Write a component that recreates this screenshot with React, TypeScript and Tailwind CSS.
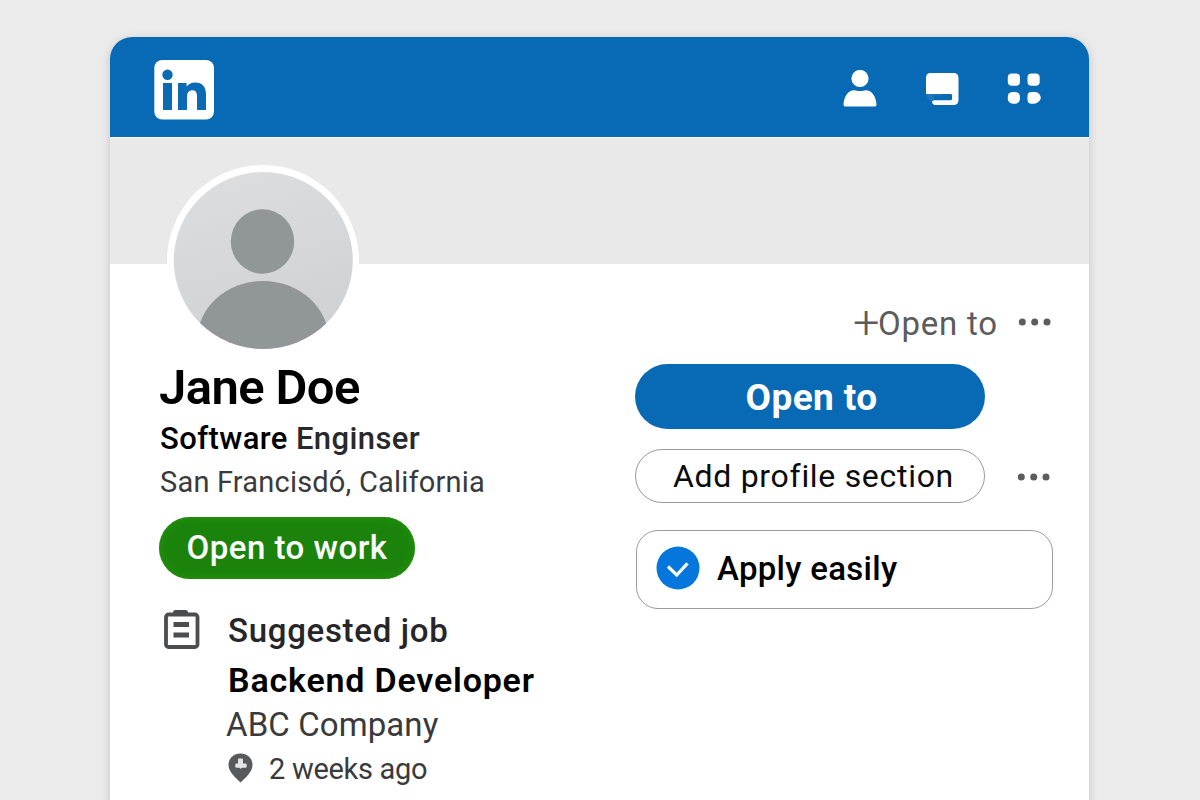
function LinkedInLogo() {
  return (
    <svg viewBox="0 0 60 60" className="h-[60px] w-[60px] shrink-0" aria-label="LinkedIn">
      <rect x=".3" width="59.700" height="59.500" rx="8" fill="#fff" />
      <g fill="#0a6ab4">
        <circle cx="13.500" cy="14.800" r="5.200" />
        <rect x="9" y="23" width="9" height="27" />
        <path d="M24 23h8.600v3.700c1.600-2.700 4.600-4.300 8.300-4.300 7.700 0 11.100 4.500 11.100 12V50h-9V36.200c0-3.800-1.300-6-4.400-6-3.600 0-5.600 2.600-5.600 6.500V50h-9z" />
      </g>
    </svg>
  );
}

function PersonIcon() {
  return (
    <svg viewBox="0 0 34 38" className="h-[38px] w-[34px]" fill="#fff">
      <circle cx="17" cy="8.500" r="8.600" />
      <path d="M2 36.500Q.5 36.500.5 34.500C1 26 5.500 20.300 11 20.300q2 0 3.500.7h5q1.500-.7 3.500-.7c5.500 0 10 5.700 10.500 14.200q0 2-1.500 2z" />
    </svg>
  );
}

function NoteIcon() {
  return (
    <svg viewBox="0 0 34 34" className="h-[34px] w-[34px]">
      <path d="M5.500 1h23Q33.500 1 33.500 6v22q0 5-5 5h-19q-2.500-.8-2.500-3 0-1.800 2-1.800H25.500q1.500 0 1.500-1.500v-3.500q0-1.200-1.200-1.200H1V6q0-5 4.500-5z" fill="#fff" />
      <path d="M1 22h16v1.500H9v4.700Q7 28.200 7 30 2 27.500 1 22z" fill="#2b7cc0" opacity=".7" />
    </svg>
  );
}

function AppsIcon() {
  return (
    <svg viewBox="0 0 34 32" className="h-8 w-[34px]" fill="#fff">
      <rect x=".8" y="0.500" width="12.200" height="12.200" rx="4" />
      <rect x="20.500" y="0.500" width="12.200" height="12.200" rx="4" />
      <rect x=".8" y="18.900" width="12.200" height="11.800" rx="5" />
      <path d="M24.500 18.900h3.500c3 0 5.800 3 5.800 5.800s-3.800 6-6.800 6h-2.500q-4 0-4-4v-3.800q0-4 4-4z" />
    </svg>
  );
}

function Avatar() {
  return (
    <svg viewBox="0 0 192 192" className="h-[192px] w-[192px]">
      <defs>
        <linearGradient id="face" x1="0" y1="0" x2="0.300" y2="1">
          <stop offset="0" stopColor="#dededf" />
          <stop offset="0.350" stopColor="#d9dadb" />
          <stop offset="1" stopColor="#cfd1d2" />
        </linearGradient>
        <clipPath id="disc">
          <ellipse cx="96.300" cy="95.500" rx="89.500" ry="88.500" />
        </clipPath>
      </defs>
      <circle cx="96" cy="96" r="96" fill="#fff" />
      <g clipPath="url(#disc)">
        <rect width="192" height="192" fill="url(#face)" />
        <ellipse cx="95.500" cy="76.500" rx="31.700" ry="32.200" fill="#919697" />
        <ellipse cx="96" cy="176" rx="66" ry="60" fill="#919697" />
      </g>
    </svg>
  );
}

function Dots() {
  return (
    <svg viewBox="0 0 34 8" className="h-2 w-[34px] shrink-0" fill="#5c5c5c">
      <circle cx="4.300" cy="4" r="3.500" />
      <circle cx="16.700" cy="4" r="3.500" />
      <circle cx="29" cy="4" r="3.500" />
    </svg>
  );
}

function ClipboardIcon() {
  return (
    <svg viewBox="0 0 36 40" className="h-10 w-9 shrink-0">
      <path d="M9 5V3.500Q9 1 11.500 1h10Q24 1 24 3.500V5z" fill="#4c4d4f" />
      <rect x="2" y="5.500" width="31.500" height="32.500" rx="2.500" fill="none" stroke="#4c4d4f" strokeWidth="3.800" />
      <rect x="9.500" y="13" width="15.500" height="5" fill="#4c4d4f" />
      <rect x="9.500" y="23.500" width="15.500" height="5" fill="#4c4d4f" />
    </svg>
  );
}

function PinIcon() {
  return (
    <svg viewBox="0 0 25 30" className="h-[30px] w-[25px] shrink-0">
      <path d="M12.500.5c7 0 12 5 12 11.500 0 6.500-6.500 12.500-12 17.500C7 24.500.5 18.500.5 12 .5 5.500 5.500.5 12.500.5z" fill="#58595b" />
      <path d="M10 6.500q0-1 1-1h3q1 0 1 1v4h2.500q1.200 0 1.200 1.200v2q0 1-1.200 1h-3.300l-1.500 1-1.500-1H8.500q-1.200 0-1.200-1.200v-1.800q0-1.200 1.200-1.200H10z" fill="#e4e4e4" />
    </svg>
  );
}

export default function App() {
  return (
    <div className="h-[800px] w-[1200px] overflow-hidden bg-[#ebebeb] pt-[37px] pl-[110px] font-['Roboto',sans-serif] whitespace-nowrap">
      <div className="h-[790px] w-[979px] overflow-hidden rounded-t-[22px] bg-white shadow-[0_2px_10px_rgba(0,0,0,0.16)]">
        <header className="flex h-[100px] items-center justify-between bg-[#086ab5] pr-[48px] pl-[44px]">
          <div className="pt-[6px]">
            <LinkedInLogo />
          </div>
          <nav className="flex items-center gap-12 pt-[3px]">
            <PersonIcon />
            <NoteIcon />
            <AppsIcon />
          </nav>
        </header>
        <div className="h-[127px] border-t border-[#f6f6f6] bg-[#e9e9e9]" />

        <main className="flex">
          <section className="-mt-[99px] w-[525px] pl-[50px]">
            <div className="pl-[7px]">
              <Avatar />
            </div>
            <h1 className="mt-[5px] -ml-[1px] h-[51px] text-[49px] leading-[52px] font-semibold tracking-[-0.6px] text-black">Jane Doe</h1>
            <p className="h-[50px] text-[31px] leading-[52px] font-medium tracking-[0.4px] text-[#29292b]">
              <span className="text-black">Software</span> Enginser
            </p>
            <p className="h-[38px] text-[29px] leading-[38px] tracking-[0.2px] text-[#3a3a3c]">San Francisdó, California</p>
            <button className="mt-[16px] -ml-[1px] flex h-[62px] w-[256px] items-center justify-center rounded-full bg-[#1b830c] text-[33px] font-medium tracking-[0.5px] text-white shadow-[inset_0_0_10px_#27940f]">
              Open to work
            </button>
            <div className="mt-[26px] flex">
              <div className="w-[68px] pt-[4px] pl-[4px]">
                <ClipboardIcon />
              </div>
              <div>
                <h2 className="h-[50px] text-[33px] leading-[52px] font-medium tracking-[0.7px] text-[#262628]">Suggested job</h2>
                <h3 className="h-[49px] text-[34px] leading-[50px] font-semibold tracking-[0.8px] text-black">Backend Developer</h3>
                <p className="-ml-[2px] h-[40px] text-[33px] leading-[41px] tracking-[0.1px] text-[#3a3a3c]">ABC Company</p>
                <p className="flex h-[48px] items-center gap-4 text-[29px] leading-[48px] tracking-[-0.3px] text-[#3a3a3c]">
                  <PinIcon />
                  <span className="pt-[1px]">2 weeks ago</span>
                </p>
              </div>
            </div>
          </section>

          <section className="w-[454px] pt-[38px]">
            <div className="flex h-[43px] items-center justify-end pr-[37px] text-[33px] tracking-[0.8px] text-[#5c5c5c]">
              <span className="pb-[3px] text-[47px] leading-[40px] font-light tracking-[-1.5px]">+</span>
              <span>Open to</span>
              <span className="ml-5 pb-1">
                <Dots />
              </span>
            </div>
            <button className="mt-[19px] flex h-[65px] w-[350px] items-center justify-center rounded-full bg-[#086ab5] pt-[3px] text-[37px] font-bold tracking-[0.4px] text-white">
              <span className="pl-[3px]">Open to</span>
            </button>
            <div className="mt-[20px] flex items-center">
              <button className="flex h-[54px] w-[350px] items-center rounded-full border border-[#98999b] pb-[1px] pl-[37px] text-[32px] tracking-[0.7px] text-[#0b0b0b]">
                Add profile section
              </button>
              <span className="ml-[32px] pt-[1px]">
                <Dots />
              </span>
            </div>
            <div className="mt-[27px] ml-[1px] flex h-[79px] w-[417px] items-center rounded-[22px] border border-[#9c9c9e] pl-[19px]">
              <svg viewBox="0 0 44 44" className="-mt-[3px] h-[44px] w-[44px]">
                <circle cx="22" cy="22" r="21.500" fill="#0577dc" />
                <path d="M12 20.500l8.700 8.500L31.500 17.300" fill="none" stroke="#fff" strokeWidth="3.200" />
              </svg>
              <span className="ml-[17px] pb-[2px] text-[33px] font-medium tracking-[0.3px] text-black">Apply easily</span>
            </div>
          </section>
        </main>
      </div>
    </div>
  );
}
